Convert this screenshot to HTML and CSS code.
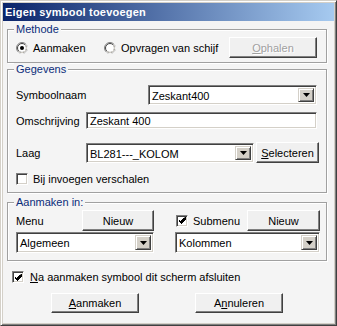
FILE: index.html
```html
<!DOCTYPE html>
<html lang="nl">
<head>
    <meta charset="UTF-8">
    <title>Eigen symbool toevoegen</title>
    <link rel="stylesheet" href="styles.css">
</head>
<body>
    <div class="window">
        <div class="titlebar">Eigen symbool toevoegen</div>
        <div class="client">

            <fieldset class="group group-methode">
                <legend>Methode</legend>
                <div class="row">
                    <label class="opt opt-aanmaken">
                        <svg class="radio" width="12" height="12" viewBox="0 0 12 12">
                            <circle cx="6" cy="6" r="5.5" fill="#fff" stroke="#808080"/>
                            <path d="M9.89 2.11 A5.5 5.5 0 0 1 2.11 9.89" fill="none" stroke="#fff"/>
                            <circle cx="6" cy="6" r="4.5" fill="none" stroke="#404040"/>
                            <path d="M9.18 2.82 A4.5 4.5 0 0 1 2.82 9.18" fill="none" stroke="#d4d0c8"/>
                            <circle cx="6" cy="6" r="2" fill="#000"/>
                        </svg>
                        Aanmaken
                    </label>
                    <label class="opt opt-schijf">
                        <svg class="radio" width="12" height="12" viewBox="0 0 12 12">
                            <circle cx="6" cy="6" r="5.5" fill="#fff" stroke="#808080"/>
                            <path d="M9.89 2.11 A5.5 5.5 0 0 1 2.11 9.89" fill="none" stroke="#fff"/>
                            <circle cx="6" cy="6" r="4.5" fill="none" stroke="#404040"/>
                            <path d="M9.18 2.82 A4.5 4.5 0 0 1 2.82 9.18" fill="none" stroke="#d4d0c8"/>
                        </svg>
                        Opvragen van schijf
                    </label>
                    <button class="btn btn-disabled btn-ophalen"><u>O</u>phalen</button>
                </div>
            </fieldset>

            <fieldset class="group group-gegevens">
                <legend>Gegevens</legend>
                <div class="row row-naam">
                    <span class="lbl lbl-naam">Symboolnaam</span>
                    <div class="combo combo-naam">
                        <span class="combo-value">Zeskant400</span>
                        <span class="combo-arrow"><svg width="7" height="4" viewBox="0 0 7 4"><path d="M0 0h7L3.5 4z"/></svg></span>
                    </div>
                </div>
                <div class="row row-omschr">
                    <span class="lbl lbl-kort">Omschrijving</span>
                    <div class="field field-omschr">Zeskant 400</div>
                </div>
                <div class="row row-laag">
                    <span class="lbl lbl-kort">Laag</span>
                    <div class="combo combo-laag">
                        <span class="combo-value">BL281---_KOLOM</span>
                        <span class="combo-arrow"><svg width="7" height="4" viewBox="0 0 7 4"><path d="M0 0h7L3.5 4z"/></svg></span>
                    </div>
                    <button class="btn btn-selecteren"><u>S</u>electeren</button>
                </div>
                <label class="row check-row">
                    <span class="check"></span>
                    Bij invoegen verschalen
                </label>
            </fieldset>

            <fieldset class="group group-menu">
                <legend>Aanmaken in:</legend>
                <div class="row row-menu">
                    <span class="lbl lbl-menu">Menu</span>
                    <button class="btn btn-nieuw">Nieuw</button>
                    <label class="sub-check">
                        <span class="check">
                            <svg width="7" height="7" viewBox="0 0 7 7"><path d="M6 0h1v3h-1v1h-1v1h-1v1h-1v1h-1v-1h-1v-1h-1v-1h-1v-2h1v1h1v1h1v-1h1v-1h1v-1h1z"/></svg>
                        </span>
                        Submenu
                    </label>
                    <button class="btn btn-nieuw btn-nieuw2">Nieuw</button>
                </div>
                <div class="row row-combos">
                    <div class="combo combo-menu">
                        <span class="combo-value">Algemeen</span>
                        <span class="combo-arrow"><svg width="7" height="4" viewBox="0 0 7 4"><path d="M0 0h7L3.5 4z"/></svg></span>
                    </div>
                    <div class="combo combo-sub">
                        <span class="combo-value">Kolommen</span>
                        <span class="combo-arrow"><svg width="7" height="4" viewBox="0 0 7 4"><path d="M0 0h7L3.5 4z"/></svg></span>
                    </div>
                </div>
            </fieldset>

            <label class="row close-row">
                <span class="check">
                    <svg width="7" height="7" viewBox="0 0 7 7"><path d="M6 0h1v3h-1v1h-1v1h-1v1h-1v1h-1v-1h-1v-1h-1v-1h-1v-2h1v1h1v1h1v-1h1v-1h1v-1h1z"/></svg>
                </span>
                <span><u>N</u>a aanmaken symbool dit scherm afsluiten</span>
            </label>

            <div class="row actions">
                <button class="btn btn-action"><u>A</u>anmaken</button>
                <button class="btn btn-action btn-annuleren">A<u>n</u>nuleren</button>
            </div>
        </div>
    </div>
</body>
</html>
```

FILE: styles.css
```css
body {
    margin: 0;
    background: #fff;
    font-family: "Liberation Sans", Arial, sans-serif;
    font-size: 11px;
    color: #000;
}
.window {
    width: 337px;
    height: 326px;
    box-sizing: border-box;
    border: 1px solid;
    border-color: #d4d0c8 #404040 #404040 #d4d0c8;
    box-shadow: inset 1px 1px #fff, inset -1px -1px #808080;
    padding: 2px;
    background: #d4d0c8;
    display: flex;
    flex-direction: column;
}
.titlebar {
    height: 18px;
    line-height: 18px;
    padding-left: 2px;
    background: linear-gradient(to right, #0a246a, #a6caf0);
    color: #fff;
    font-weight: bold;
    letter-spacing: 0.2px;
}
.client {
    flex: 1;
    background: #f4f4f4;
    padding: 0 7px 0 4px;
}
.row {
    display: flex;
    align-items: center;
}

/* group boxes */
.group {
    margin: 0;
    padding: 0 0 0 8px;
    min-width: 0;
    border: 1px solid #a0a0a0;
    box-shadow: 1px 1px 0 #fff, inset 1px 1px 0 #fff;
}
.group legend {
    color: #0b2c7a;
    background: #f4f4f4;
    line-height: 13px;
    padding: 0 2px;
    margin-left: -2px;
}
.group-methode {
    margin-top: 2px;
    padding-top: 1px;
    padding-bottom: 4px;
}
.group-gegevens {
    margin-top: 0;
    padding-bottom: 7px;
}
.group-menu {
    margin-top: 3px;
    padding-bottom: 7px;
}

/* radio options */
.opt {
    display: flex;
    align-items: center;
    gap: 5px;
}
.opt-aanmaken {
    width: 88px;
}
.opt-schijf {
    width: 125px;
}

/* buttons */
.btn {
    box-sizing: border-box;
    height: 21px;
    padding: 0;
    font: inherit;
    color: #000;
    background: #f0f0f0;
    border: 1px solid;
    border-color: #fff #404040 #404040 #fff;
    box-shadow: inset -1px -1px #808080;
}
.btn-disabled {
    color: #a0a0a0;
    text-shadow: 1px 1px #fff;
}
.btn-ophalen {
    width: 88px;
}
.btn-selecteren {
    width: 63px;
    margin-left: 2px;
}
.btn-nieuw {
    width: 72px;
}
.btn-nieuw2 {
    width: 73px;
}
.btn-action {
    width: 88px;
    height: 20px;
}

/* labels and fields */
.lbl-naam {
    width: 132px;
}
.lbl-kort {
    width: 70px;
}
.lbl-menu {
    width: 66px;
}
.row-naam {
    margin-top: 9px;
}
.row-omschr {
    margin-top: 7px;
}
.row-laag {
    margin-top: 13px;
}
.check-row {
    margin-top: 10px;
    gap: 5px;
}
.combo {
    display: flex;
    box-sizing: border-box;
    height: 20px;
    padding: 2px;
    background: #fff;
    border: 1px solid;
    border-color: #808080 #fff #fff #808080;
    box-shadow: inset 1px 1px #404040, inset -1px -1px #d4d0c8;
}
.combo-value {
    flex: 1;
    line-height: 16px;
    padding-left: 1px;
}
.combo-arrow {
    display: flex;
    align-items: center;
    justify-content: center;
    box-sizing: border-box;
    width: 16px;
    background: #d4d0c8;
    border: 1px solid;
    border-color: #d4d0c8 #404040 #404040 #d4d0c8;
    box-shadow: inset 1px 1px #fff, inset -1px -1px #808080;
}
.combo-naam {
    width: 169px;
}
.combo-laag {
    width: 168px;
}
.field {
    box-sizing: border-box;
    height: 17px;
    line-height: 13px;
    padding: 2px 3px;
    background: #fff;
    border: 1px solid;
    border-color: #808080 #fff #fff #808080;
    box-shadow: inset 1px 1px #404040, inset -1px -1px #d4d0c8;
}
.field-omschr {
    width: 231px;
}
.check {
    display: flex;
    align-items: center;
    justify-content: center;
    box-sizing: border-box;
    width: 12px;
    height: 12px;
    background: #fff;
    border: 1px solid;
    border-color: #808080 #fff #fff #808080;
    box-shadow: inset 1px 1px #404040, inset -1px -1px #d4d0c8;
}

/* aanmaken in */
.row-menu {
    margin-top: 1px;
}
.sub-check {
    display: flex;
    align-items: center;
    gap: 5px;
    width: 71px;
    margin-left: 22px;
}
.row-combos {
    margin-top: 1px;
}
.combo-menu {
    width: 138px;
    height: 21px;
}
.combo-sub {
    width: 145px;
    height: 21px;
    margin-left: 21px;
}

/* bottom */
.close-row {
    margin: 10px 0 0 5px;
    gap: 6px;
}
.actions {
    margin-top: 10px;
    padding-left: 44px;
    gap: 56px;
}
```
